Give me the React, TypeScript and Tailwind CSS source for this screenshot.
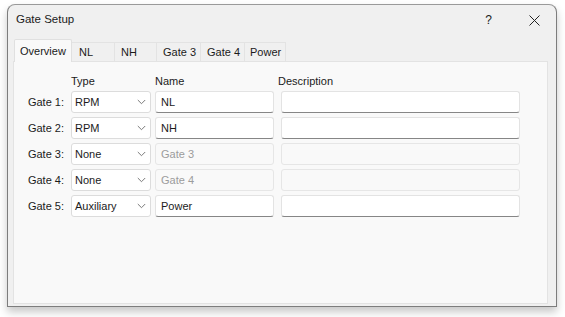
import React from "react";

const font = { fontFamily: '"Liberation Sans", Arial, sans-serif' };

function Chevron() {
  return (
    <svg width="9" height="6" viewBox="0 0 9 6" className="shrink-0">
      <path d="M0.8 1 L4.5 4.7 L8.2 1" fill="none" stroke="#6b6b6b" strokeWidth="0.9" />
    </svg>
  );
}

function Select({ value }: { value: string }) {
  return (
    <div className="h-[22px] w-[80px] bg-white border border-[#dcdcdc] rounded-[3px] flex items-center pl-[3px] pr-[4px] justify-between">
      <span className="text-[11px] text-[#1b1b1b]">{value}</span>
      <Chevron />
    </div>
  );
}

function Input({ value, width, disabled }: { value: string; width: string; disabled?: boolean }) {
  if (disabled) {
    return (
      <div className={`h-[22px] ${width} bg-[#f9f9f9] border border-[#e6e6e6] rounded-[3px] flex items-center pl-[5px]`}>
        <span className="text-[11px] text-[#9c9c9c]">{value}</span>
      </div>
    );
  }
  return (
    <div className={`h-[22px] ${width} bg-white border border-[#e3e3e3] border-b-[#868686] rounded-[3px] flex items-center pl-[5px]`}>
      <span className="text-[11px] text-[#1b1b1b]">{value}</span>
    </div>
  );
}

const rows = [
  { label: "Gate 1:", type: "RPM", name: "NL", disabled: false },
  { label: "Gate 2:", type: "RPM", name: "NH", disabled: false },
  { label: "Gate 3:", type: "None", name: "Gate 3", disabled: true },
  { label: "Gate 4:", type: "None", name: "Gate 4", disabled: true },
  { label: "Gate 5:", type: "Auxiliary", name: "Power", disabled: false },
];

const tabs = [
  { name: "NL", w: "w-[43px]", pl: "pl-[7px]" },
  { name: "NH", w: "w-[42px]", pl: "pl-[6px]" },
  { name: "Gate 3", w: "w-[44px]", pl: "pl-[6px]" },
  { name: "Gate 4", w: "w-[44px]", pl: "pl-[6px]" },
  { name: "Power", w: "w-[41px]", pl: "pl-[5px]" },
];

export default function App() {
  return (
    <div className="w-[565px] h-[317px] bg-white pt-[4px] pl-[7px]" style={font}>
      <div className="w-[550px] h-[303px] rounded-t-[8px] border border-[#9a9a9a] border-l-[#7d7d7d] border-r-[#7d7d7d] border-b-[#7d7d7d] bg-[#f0f0f0] shadow-[0_5px_9px_rgba(0,0,0,0.22)] flex flex-col">
        <div className="h-[30px] flex items-center pl-[8px] shrink-0">
          <span className="text-[11.5px] text-[#1b1b1b]">Gate Setup</span>
          <span className="ml-auto text-[12px] text-[#1b1b1b] mr-[37px]">?</span>
          <svg width="11" height="11" viewBox="0 0 11 11" className="mr-[16px]">
            <path d="M0.5 0.5 L10.5 10.5 M10.5 0.5 L0.5 10.5" stroke="#222" strokeWidth="1" />
          </svg>
        </div>
        <div className="flex items-end pl-[6px] h-[26px] shrink-0 relative z-10">
          <div className="w-[58px] h-[23px] bg-[#f9f9f9] border border-[#e0e0e0] border-b-0 rounded-t-[2px] flex items-center pl-[5px] text-[11px] text-[#1b1b1b] -mb-[1px]">
            Overview
          </div>
          {tabs.map((t) => (
            <div
              key={t.name}
              className={`${t.w} h-[19px] bg-[#f0f0f0] border border-[#e3e3e3] border-l-0 border-b-0 flex items-center ${t.pl} text-[11px] text-[#1b1b1b]`}
            >
              {t.name}
            </div>
          ))}
        </div>
        <div className="ml-[5px] w-[535px] flex-1 mb-[2px] bg-[#f9f9f9] border border-[#e3e3e3] pl-[13px] pt-[11px]">
          <div className="flex items-center h-[16px]">
            <div className="w-[44px]" />
            <div className="w-[84px] text-[11px] text-[#1b1b1b]">Type</div>
            <div className="w-[123px] text-[11px] text-[#1b1b1b]">Name</div>
            <div className="text-[11px] text-[#1b1b1b]">Description</div>
          </div>
          <div className="mt-[2px] flex flex-col gap-[4px]">
            {rows.map((r) => (
              <div key={r.label} className="flex items-center h-[22px]">
                <div className="w-[37px] text-[11px] text-[#1b1b1b] text-right mr-[7px]">{r.label}</div>
                <Select value={r.type} />
                <div className="ml-[4px]">
                  <Input value={r.name} width="w-[119px]" disabled={r.disabled} />
                </div>
                <div className="ml-[7px]">
                  <Input value="" width="w-[239px]" disabled={r.disabled} />
                </div>
              </div>
            ))}
          </div>
        </div>
      </div>
    </div>
  );
}
